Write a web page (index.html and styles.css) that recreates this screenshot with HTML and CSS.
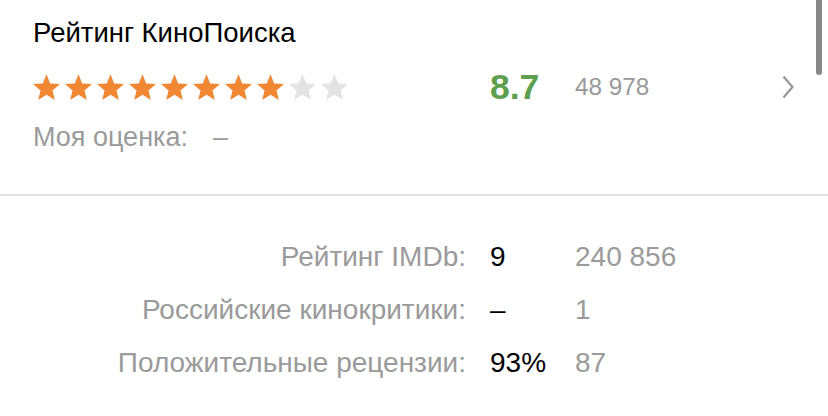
FILE: index.html
```html
<!DOCTYPE html>
<html lang="ru">
<head>
<meta charset="utf-8">
<link rel="stylesheet" href="styles.css">
</head>
<body>
<div class="page">
  <section class="kp">
    <h2 class="kp-title">Рейтинг КиноПоиска</h2>
    <div class="kp-row">
      <div class="stars">
        <svg class="star on" viewBox="0.8 1.3 22.4 21.6"><path d="M12 1.5l3.1 7.6 8.1.6-6.2 5.3 1.9 7.9L12 18.6l-6.9 4.3 1.9-7.9L.8 9.7l8.1-.6z"/></svg>
        <svg class="star on" viewBox="0.8 1.3 22.4 21.6"><path d="M12 1.5l3.1 7.6 8.1.6-6.2 5.3 1.9 7.9L12 18.6l-6.9 4.3 1.9-7.9L.8 9.7l8.1-.6z"/></svg>
        <svg class="star on" viewBox="0.8 1.3 22.4 21.6"><path d="M12 1.5l3.1 7.6 8.1.6-6.2 5.3 1.9 7.9L12 18.6l-6.9 4.3 1.9-7.9L.8 9.7l8.1-.6z"/></svg>
        <svg class="star on" viewBox="0.8 1.3 22.4 21.6"><path d="M12 1.5l3.1 7.6 8.1.6-6.2 5.3 1.9 7.9L12 18.6l-6.9 4.3 1.9-7.9L.8 9.7l8.1-.6z"/></svg>
        <svg class="star on" viewBox="0.8 1.3 22.4 21.6"><path d="M12 1.5l3.1 7.6 8.1.6-6.2 5.3 1.9 7.9L12 18.6l-6.9 4.3 1.9-7.9L.8 9.7l8.1-.6z"/></svg>
        <svg class="star on" viewBox="0.8 1.3 22.4 21.6"><path d="M12 1.5l3.1 7.6 8.1.6-6.2 5.3 1.9 7.9L12 18.6l-6.9 4.3 1.9-7.9L.8 9.7l8.1-.6z"/></svg>
        <svg class="star on" viewBox="0.8 1.3 22.4 21.6"><path d="M12 1.5l3.1 7.6 8.1.6-6.2 5.3 1.9 7.9L12 18.6l-6.9 4.3 1.9-7.9L.8 9.7l8.1-.6z"/></svg>
        <svg class="star on" viewBox="0.8 1.3 22.4 21.6"><path d="M12 1.5l3.1 7.6 8.1.6-6.2 5.3 1.9 7.9L12 18.6l-6.9 4.3 1.9-7.9L.8 9.7l8.1-.6z"/></svg>
        <svg class="star off" viewBox="0.8 1.3 22.4 21.6"><path d="M12 1.5l3.1 7.6 8.1.6-6.2 5.3 1.9 7.9L12 18.6l-6.9 4.3 1.9-7.9L.8 9.7l8.1-.6z"/></svg>
        <svg class="star off" viewBox="0.8 1.3 22.4 21.6"><path d="M12 1.5l3.1 7.6 8.1.6-6.2 5.3 1.9 7.9L12 18.6l-6.9 4.3 1.9-7.9L.8 9.7l8.1-.6z"/></svg>
      </div>
      <div class="kp-score">8.7</div>
      <div class="kp-votes">48 978</div>
      <svg class="chevron" viewBox="0 0 12 24"><path d="M1.5 1.5L10.5 12 1.5 22.5"/></svg>
    </div>
    <div class="my-rate">Моя оценка:<span class="my-rate-val">–</span></div>
  </section>
  <section class="others">
    <div class="o-label">Рейтинг IMDb:</div>
    <div class="o-val">9</div>
    <div class="o-count">240 856</div>
    <div class="o-label">Российские кинокритики:</div>
    <div class="o-val">–</div>
    <div class="o-count">1</div>
    <div class="o-label">Положительные рецензии:</div>
    <div class="o-val">93%</div>
    <div class="o-count">87</div>
  </section>
  <div class="scrollbar"></div>
</div>
</body>
</html>
```
FILE: styles.css
```css
* { box-sizing: border-box; }
html, body { margin: 0; padding: 0; background: #fff; }
body {
  font-family: "Liberation Sans", Arial, sans-serif;
  width: 828px;
  height: 416px;
  overflow: hidden;
}
.page { position: relative; height: 416px; }

.kp {
  padding: 18px 0 0 33px;
  height: 196px;
  border-bottom: 2px solid #e3e3e3;
}
.kp-title {
  margin: 0;
  font-size: 27.5px;
  line-height: 30px;
  font-weight: normal;
  color: #000;
}
.kp-row {
  display: flex;
  align-items: center;
  height: 36px;
  margin-top: 21px;
}
.stars {
  display: flex;
  gap: 5px;
  width: 457px;
}
.star { width: 27px; height: 26px; display: block; }
.star.on { fill: #ef8733; }
.star.off { fill: #e3e3e3; }
.kp-score {
  width: 85px;
  font-size: 35.5px;
  font-weight: bold;
  color: #5d9f4d;
}
.kp-votes {
  width: 207px;
  font-size: 24.3px;
  color: #999;
}
.chevron {
  width: 12px;
  height: 24px;
  fill: none;
  stroke: #9a9a9a;
  stroke-width: 2.4;
}
.my-rate {
  margin-top: 17px;
  font-size: 27px;
  line-height: 30px;
  color: #9a9a9a;
}
.my-rate-val { margin-left: 25px; }

.others {
  display: grid;
  grid-template-columns: 466px 61px 1fr;
  column-gap: 24px;
  row-gap: 0;
  padding-top: 34px;
  font-size: 28px;
  line-height: 53px;
}
.o-label { text-align: right; color: #9a9a9a; }
.o-val { color: #000; }
.o-count { color: #9a9a9a; }

.scrollbar {
  position: absolute;
  top: -6px;
  right: 6px;
  width: 6px;
  height: 81px;
  border-radius: 3px;
  background: #888;
}
```
